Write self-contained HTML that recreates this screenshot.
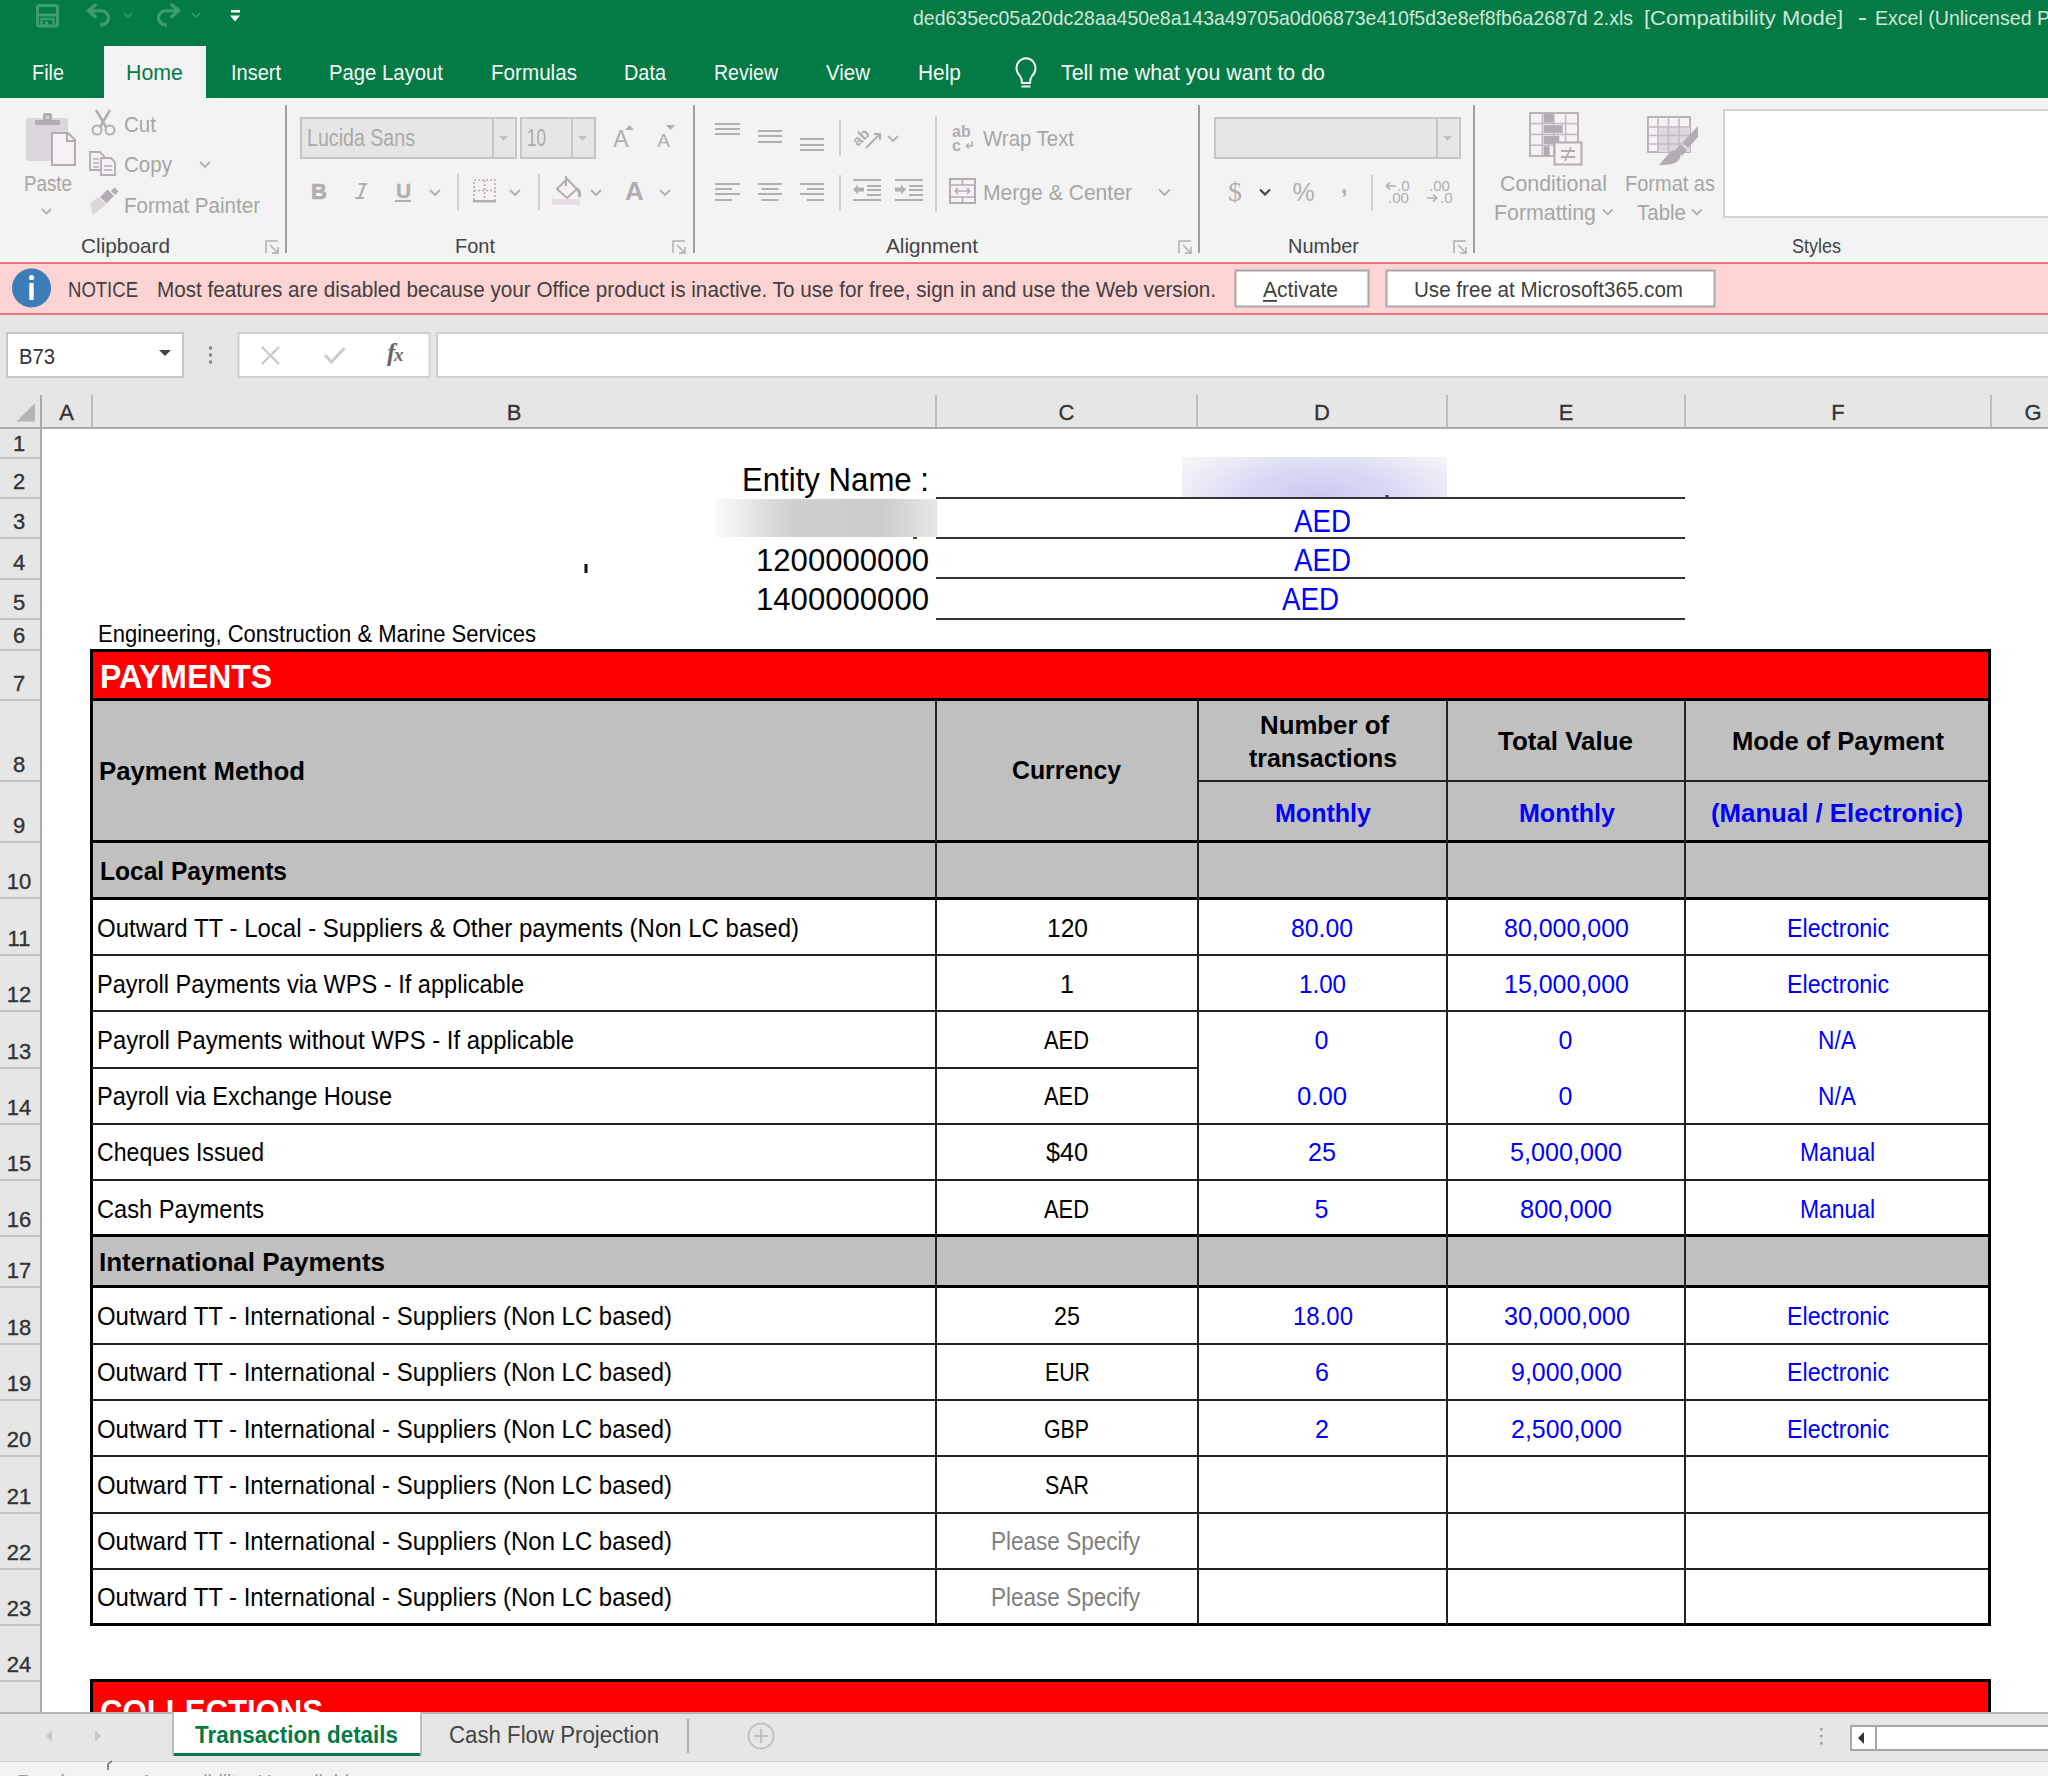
<!DOCTYPE html>
<html><head><meta charset="utf-8"><style>
html,body{margin:0;padding:0;background:#fff;overflow:hidden;width:2048px;height:1776px;}
svg{display:block;font-family:"Liberation Sans",sans-serif;white-space:pre;}
</style></head><body>
<svg width="2048" height="1776" viewBox="0 0 2048 1776">
<rect x="0" y="0" width="2048" height="98" fill="#047a45" />
<rect x="104" y="46" width="102" height="52" fill="#f3f3f3" />
<text x="32" y="79.5" font-size="22" fill="#f4f8f5" textLength="32" lengthAdjust="spacingAndGlyphs" >File</text>
<text x="231" y="79.5" font-size="22" fill="#f4f8f5" textLength="50" lengthAdjust="spacingAndGlyphs" >Insert</text>
<text x="329" y="79.5" font-size="22" fill="#f4f8f5" textLength="114" lengthAdjust="spacingAndGlyphs" >Page Layout</text>
<text x="491" y="79.5" font-size="22" fill="#f4f8f5" textLength="86" lengthAdjust="spacingAndGlyphs" >Formulas</text>
<text x="624" y="79.5" font-size="22" fill="#f4f8f5" textLength="42" lengthAdjust="spacingAndGlyphs" >Data</text>
<text x="714" y="79.5" font-size="22" fill="#f4f8f5" textLength="64" lengthAdjust="spacingAndGlyphs" >Review</text>
<text x="826" y="79.5" font-size="22" fill="#f4f8f5" textLength="44" lengthAdjust="spacingAndGlyphs" >View</text>
<text x="918" y="79.5" font-size="22" fill="#f4f8f5" textLength="43" lengthAdjust="spacingAndGlyphs" >Help</text>
<text x="1061" y="79.5" font-size="22" fill="#f4f8f5" textLength="264" lengthAdjust="spacingAndGlyphs" >Tell me what you want to do</text>
<text x="126" y="79.5" font-size="22" fill="#047a45" textLength="57" lengthAdjust="spacingAndGlyphs" >Home</text>
<text x="913" y="25" font-size="21" fill="#d2e5d9" textLength="720" lengthAdjust="spacingAndGlyphs" >ded635ec05a20dc28aa450e8a143a49705a0d06873e410f5d3e8ef8fb6a2687d 2.xls</text>
<text x="1644" y="25" font-size="21" fill="#d2e5d9" textLength="199" lengthAdjust="spacingAndGlyphs" >[Compatibility Mode]</text>
<rect x="1859" y="18" width="7" height="2" fill="#d2e5d9" />
<text x="1875" y="25" font-size="21" fill="#d2e5d9" textLength="175" lengthAdjust="spacingAndGlyphs" >Excel (Unlicensed P</text>
<rect x="37.5" y="5.5" width="20" height="20.5" rx="1.5" fill="none" stroke="#3e9d6c" stroke-width="3"/>
<rect x="39" y="13.5" width="17" height="3" rx="1.2" fill="#3e9d6c"/>
<rect x="41.5" y="19" width="12" height="7" fill="none" stroke="#3e9d6c" stroke-width="2.4"/><rect x="45" y="21.5" width="3" height="5" fill="#3e9d6c"/>
<path d="M96.5,4 l-8.5,6.8 l8.5,6.8 M88.5,10.8 h13 a7,7 0 0 1 0,14 h-1.5" fill="none" stroke="#3e9d6c" stroke-width="3.2" stroke-linejoin="round"/>
<path d="M124,13 l4,4 l4,-4" fill="none" stroke="#3e9d6c" stroke-width="1.5"/>
<path d="M170.5,4 l8.5,6.8 l-8.5,6.8 M178.5,10.8 h-13 a7,7 0 0 0 0,14 h1.5" fill="none" stroke="#3e9d6c" stroke-width="3.2" stroke-linejoin="round"/>
<path d="M192,13 l4,4 l4,-4" fill="none" stroke="#3e9d6c" stroke-width="1.5"/>
<rect x="231" y="10" width="9" height="2.5" fill="#fff"/><path d="M230,15.5 h10 l-5,6 z" fill="#fff"/>
<path d="M1020,76 a9.5,10 0 1 1 12,0 c-1.5,2 -2,4 -2,7 h-8 c0,-3 -0.5,-5 -2,-7 z M1021.5,86.5 h9" fill="none" stroke="#f4f8f5" stroke-width="2"/>
<rect x="0" y="98" width="2048" height="163" fill="#f3f3f3" />
<rect x="285" y="105" width="2" height="148" fill="#9e9e9e" />
<rect x="693" y="105" width="2" height="148" fill="#9e9e9e" />
<rect x="1198" y="105" width="2" height="148" fill="#9e9e9e" />
<rect x="1473" y="105" width="2" height="148" fill="#9e9e9e" />
<text x="81" y="253" font-size="21" fill="#444444" textLength="89" lengthAdjust="spacingAndGlyphs" >Clipboard</text>
<text x="455" y="253" font-size="21" fill="#444444" textLength="40" lengthAdjust="spacingAndGlyphs" >Font</text>
<text x="886" y="253" font-size="21" fill="#444444" textLength="92" lengthAdjust="spacingAndGlyphs" >Alignment</text>
<text x="1288" y="253" font-size="21" fill="#444444" textLength="71" lengthAdjust="spacingAndGlyphs" >Number</text>
<text x="1792" y="253" font-size="21" fill="#444444" textLength="49" lengthAdjust="spacingAndGlyphs" >Styles</text>
<path d="M266,253 v-12 h12" fill="none" stroke="#b0b0b0" stroke-width="1.5"/><path d="M270,245 l8,8 M278,247 v6 h-6" fill="none" stroke="#b0b0b0" stroke-width="1.5"/>
<path d="M673,253 v-12 h12" fill="none" stroke="#b0b0b0" stroke-width="1.5"/><path d="M677,245 l8,8 M685,247 v6 h-6" fill="none" stroke="#b0b0b0" stroke-width="1.5"/>
<path d="M1179,253 v-12 h12" fill="none" stroke="#b0b0b0" stroke-width="1.5"/><path d="M1183,245 l8,8 M1191,247 v6 h-6" fill="none" stroke="#b0b0b0" stroke-width="1.5"/>
<path d="M1454,253 v-12 h12" fill="none" stroke="#b0b0b0" stroke-width="1.5"/><path d="M1458,245 l8,8 M1466,247 v6 h-6" fill="none" stroke="#b0b0b0" stroke-width="1.5"/>
<rect x="26" y="118" width="42" height="43" rx="3" fill="#dbd6db"/>
<rect x="35" y="120" width="25" height="5" rx="1" fill="#b2adb2"/><rect x="43" y="113" width="9" height="8" rx="2" fill="#b2adb2"/><rect x="46" y="116" width="3" height="3" fill="#dbd6db"/>
<path d="M52,133 h16 l7,7 v25 h-23 z" fill="#f7f0f4" stroke="#b2adb2" stroke-width="2"/><path d="M67,133 v8 h8" fill="none" stroke="#b2adb2" stroke-width="2"/>
<text x="24" y="191" font-size="22" fill="#a6a6a6" textLength="48" lengthAdjust="spacingAndGlyphs" >Paste</text>
<path d="M42,209 l4.5,4.5 l4.5,-4.5" fill="none" stroke="#b2adb2" stroke-width="1.8"/>
<path d="M96,110 l10,17 M110,110 l-10,17" fill="none" stroke="#b2adb2" stroke-width="2.5"/><circle cx="97" cy="130" r="4.5" fill="none" stroke="#b2adb2" stroke-width="2"/><circle cx="110" cy="130" r="4.5" fill="none" stroke="#b2adb2" stroke-width="2"/>
<text x="124" y="132" font-size="22" fill="#a6a6a6" textLength="32" lengthAdjust="spacingAndGlyphs" >Cut</text>
<path d="M90,152 h10 l4,4 v14 h-14 z" fill="#f7f0f4" stroke="#b2adb2" stroke-width="1.8"/><path d="M101,158 h10 l4,4 v13 h-14 z" fill="#f7f0f4" stroke="#b2adb2" stroke-width="1.8"/>
<path d="M93,159 h6 M93,163 h6 M93,167 h6 M104,166 h8 M104,170 h8" stroke="#b2adb2" stroke-width="1.5"/>
<text x="124" y="172" font-size="22" fill="#a6a6a6" textLength="48" lengthAdjust="spacingAndGlyphs" >Copy</text>
<path d="M200,162 l5,5 l5,-5" fill="none" stroke="#b2adb2" stroke-width="1.8"/>
<path d="M90.5,203 l8,-6 l7.5,7.5 l-13.5,11 z" fill="#dcd7dc"/><path d="M100,197 l7.5,-7.5 l6.5,6.5 l-7.5,7.5 z" fill="#b2adb2"/><path d="M111,191 l3.5,-3.5 l4,4 l-3.5,3.5 z" fill="#b2adb2"/>
<text x="124" y="213" font-size="22" fill="#a6a6a6" textLength="136" lengthAdjust="spacingAndGlyphs" >Format Painter</text>
<rect x="301" y="118" width="215" height="40" fill="#e6e6e6" stroke="#c6c6c6" stroke-width="2"/>
<rect x="492" y="119" width="2" height="38" fill="#c6c6c6" />
<path d="M499,136 h9 l-4.5,5 z" fill="#c0c0c0"/>
<rect x="521" y="118" width="74" height="40" fill="#e6e6e6" stroke="#c6c6c6" stroke-width="2"/>
<rect x="571" y="119" width="2" height="38" fill="#c6c6c6" />
<path d="M578,136 h9 l-4.5,5 z" fill="#c0c0c0"/>
<text x="307" y="146" font-size="23" fill="#aaaaaa" textLength="108" lengthAdjust="spacingAndGlyphs" >Lucida Sans</text>
<text x="527" y="146" font-size="23" fill="#aaaaaa" textLength="19" lengthAdjust="spacingAndGlyphs" >10</text>
<text x="621.0" y="147" font-size="23" fill="#b2adb2" text-anchor="middle" >A</text>
<path d="M625,130 l4.5,-5 l4.5,5 z" fill="#b2adb2"/>
<text x="663.5" y="147" font-size="19" fill="#b2adb2" text-anchor="middle" >A</text>
<path d="M666,125 l4.5,5 l4.5,-5 z" fill="#b2adb2"/>
<text x="319.0" y="198.5" font-size="22" font-weight="bold" fill="#b2adb2" text-anchor="middle" stroke="#b2adb2" stroke-width="0.6">B</text>
<path d="M358.8,184 h8.4 M364.8,184 l-5.4,14 M355.2,198 h8.8" fill="none" stroke="#b2adb2" stroke-width="2.2"/>
<text x="403.5" y="198" font-size="21" font-weight="bold" fill="#b2adb2" text-anchor="middle" stroke="#b2adb2" stroke-width="0.4">U</text>
<rect x="395" y="200" width="16" height="2" fill="#b2adb2" />
<path d="M430,190 l5,5 l5,-5" fill="none" stroke="#b2adb2" stroke-width="1.8"/>
<path d="M510,190 l5,5 l5,-5" fill="none" stroke="#b2adb2" stroke-width="1.8"/>
<path d="M591,190 l5,5 l5,-5" fill="none" stroke="#b2adb2" stroke-width="1.8"/>
<path d="M660,190 l5,5 l5,-5" fill="none" stroke="#b2adb2" stroke-width="1.8"/>
<rect x="457" y="174" width="2" height="36" fill="#d0d0d0" />
<rect x="538" y="174" width="2" height="36" fill="#d0d0d0" />
<rect x="474" y="180" width="21" height="21" fill="#f7f0f4" stroke="#b2adb2" stroke-width="1.6" stroke-dasharray="2,2"/><path d="M484.5,180 v21 M474,190.5 h21" stroke="#b2adb2" stroke-width="1.6" stroke-dasharray="2,2"/><rect x="473" y="200" width="23" height="2.5" fill="#b2adb2"/>
<path d="M557,189 l10,-10 l10,10 l-10,9 z" fill="#f7f0f4" stroke="#b2adb2" stroke-width="2"/><path d="M566,176 v10" stroke="#b2adb2" stroke-width="2"/><path d="M577,189 q4,3 2,8" fill="none" stroke="#b2adb2" stroke-width="3"/>
<rect x="552" y="199" width="28" height="6" fill="#e6dce3" />
<text x="634.5" y="200" font-size="26" font-weight="bold" fill="#b2adb2" text-anchor="middle" >A</text>
<rect x="715" y="123" width="25" height="2" fill="#b2adb2" />
<rect x="715" y="128" width="25" height="2" fill="#b2adb2" />
<rect x="715" y="133" width="25" height="2" fill="#b2adb2" />
<rect x="758" y="130" width="24" height="2" fill="#b2adb2" />
<rect x="758" y="135" width="24" height="2" fill="#b2adb2" />
<rect x="758" y="141" width="24" height="2" fill="#b2adb2" />
<rect x="800" y="138" width="24" height="2" fill="#b2adb2" />
<rect x="800" y="144" width="24" height="2" fill="#b2adb2" />
<rect x="800" y="149" width="24" height="2" fill="#b2adb2" />
<rect x="839" y="120" width="2" height="36" fill="#d0d0d0" />
<rect x="839" y="175" width="2" height="36" fill="#d0d0d0" />
<text x="0" y="0" font-size="15" fill="#b2adb2" transform="translate(858,147) rotate(-45)" font-weight="bold">ab</text><path d="M866,148 l14,-14 M874,134 h6 v6" fill="none" stroke="#b2adb2" stroke-width="2"/>
<path d="M888,136 l5,5 l5,-5" fill="none" stroke="#b2adb2" stroke-width="1.8"/>
<rect x="935" y="116" width="2" height="96" fill="#d0d0d0" />
<text x="952" y="137" font-size="16" font-weight="bold" fill="#b2adb2">ab</text><text x="952" y="151" font-size="16" font-weight="bold" fill="#b2adb2">c</text><path d="M972,141 v5 h-6 M966,146 l3,-2.5 M966,146 l3,2.5" fill="none" stroke="#b2adb2" stroke-width="1.5"/>
<text x="983" y="146" font-size="22" fill="#a6a6a6" textLength="91" lengthAdjust="spacingAndGlyphs" >Wrap Text</text>
<rect x="715" y="183" width="25" height="2" fill="#b2adb2" />
<rect x="715" y="188" width="17" height="2" fill="#b2adb2" />
<rect x="715" y="193" width="25" height="2" fill="#b2adb2" />
<rect x="715" y="199" width="17" height="2" fill="#b2adb2" />
<rect x="758" y="183" width="24" height="2" fill="#b2adb2" />
<rect x="761.5" y="188" width="17" height="2" fill="#b2adb2" />
<rect x="758" y="193" width="24" height="2" fill="#b2adb2" />
<rect x="761.5" y="199" width="17" height="2" fill="#b2adb2" />
<rect x="800" y="183" width="24" height="2" fill="#b2adb2" />
<rect x="807" y="188" width="17" height="2" fill="#b2adb2" />
<rect x="800" y="193" width="24" height="2" fill="#b2adb2" />
<rect x="807" y="199" width="17" height="2" fill="#b2adb2" />
<rect x="853" y="179" width="28" height="2" fill="#b2adb2" />
<rect x="853" y="199" width="28" height="2" fill="#b2adb2" />
<rect x="867" y="185" width="14" height="2" fill="#b2adb2" />
<rect x="867" y="189" width="14" height="2" fill="#b2adb2" />
<rect x="867" y="194" width="14" height="2" fill="#b2adb2" />
<path d="M853,189.5 l5,-5 v3 h6 v4 h-6 v3 z" fill="#b2adb2"/>
<rect x="895" y="179" width="28" height="2" fill="#b2adb2" />
<rect x="895" y="199" width="28" height="2" fill="#b2adb2" />
<rect x="909" y="185" width="14" height="2" fill="#b2adb2" />
<rect x="909" y="189" width="14" height="2" fill="#b2adb2" />
<rect x="909" y="194" width="14" height="2" fill="#b2adb2" />
<path d="M906,189.5 l-5,-5 v3 h-6 v4 h6 v3 z" fill="#b2adb2"/>
<rect x="950" y="179" width="25" height="24" fill="#f7f0f4" stroke="#b2adb2" stroke-width="2"/><path d="M950,185 h25 M950,197 h25 M962.5,179 v6 M962.5,197 v6 M955,191 h15 M955,191 l3,-3 M955,191 l3,3 M970,191 l-3,-3 M970,191 l-3,3" fill="none" stroke="#b2adb2" stroke-width="1.6"/>
<text x="983" y="200" font-size="22" fill="#a6a6a6" textLength="149" lengthAdjust="spacingAndGlyphs" >Merge &amp; Center</text>
<path d="M1159,189.5 l5.5,5.5 l5.5,-5.5" fill="none" stroke="#b2adb2" stroke-width="1.8"/>
<rect x="1215" y="118" width="245" height="40" fill="#e6e6e6" stroke="#c6c6c6" stroke-width="2"/>
<rect x="1436" y="119" width="2" height="38" fill="#c6c6c6" />
<path d="M1443,136 h9 l-4.5,5 z" fill="#c0c0c0"/>
<text x="1235.0" y="201" font-size="28" fill="#b2adb2" text-anchor="middle" font-family="Liberation Serif">$</text>
<path d="M1260,189.5 l5,5 l5,-5" fill="none" stroke="#444" stroke-width="2.2"/>
<text x="1303.5" y="201" font-size="25" fill="#b2adb2" text-anchor="middle" >%</text>
<text x="1344.0" y="193" font-size="24" font-weight="bold" fill="#b2adb2" text-anchor="middle" >,</text>
<rect x="1371" y="175" width="2" height="36" fill="#d0d0d0" />
<text x="1397" y="191" font-size="15" fill="#b2adb2">.0</text><text x="1388" y="203" font-size="15" fill="#b2adb2">.00</text><path d="M1386,186 h10 M1386,186 l4,-3.5 M1386,186 l4,3.5" fill="none" stroke="#b2adb2" stroke-width="1.6"/>
<text x="1429" y="191" font-size="15" fill="#b2adb2">.00</text><text x="1440" y="203" font-size="15" fill="#b2adb2">.0</text><path d="M1427,198 h10 M1437,198 l-4,-3.5 M1437,198 l-4,3.5" fill="none" stroke="#b2adb2" stroke-width="1.6"/>
<rect x="1530" y="113" width="48" height="43" fill="#f7f0f4" stroke="#b2adb2" stroke-width="1.8"/>
<rect x="1541.5" y="113" width="1.6" height="43" fill="#c2bdc2" />
<rect x="1553.0" y="113" width="1.6" height="43" fill="#c2bdc2" />
<rect x="1564.8" y="113" width="1.6" height="43" fill="#c2bdc2" />
<rect x="1530" y="122.8" width="48" height="1.6" fill="#c2bdc2" />
<rect x="1530" y="133.6" width="48" height="1.6" fill="#c2bdc2" />
<rect x="1530" y="144.39999999999998" width="48" height="1.6" fill="#c2bdc2" />
<rect x="1543.6" y="113.8" width="10.2" height="8.9" fill="#b3adb3" />
<rect x="1543.6" y="125.2" width="19.1" height="7.7" fill="#b3adb3" />
<rect x="1543.6" y="135.8" width="15.7" height="8.2" fill="#b3adb3" />
<rect x="1543.6" y="146.2" width="6.1" height="9.2" fill="#b3adb3" />
<rect x="1554.5" y="142.5" width="27" height="22" fill="#f7f0f4" stroke="#b2adb2" stroke-width="2"/>
<path d="M1561,151 h14 M1561,157 h14 M1571,147 l-6,14" stroke="#b2adb2" stroke-width="1.8"/>
<text x="1500" y="191" font-size="22" fill="#a6a6a6" textLength="107" lengthAdjust="spacingAndGlyphs" >Conditional</text>
<text x="1494" y="220" font-size="22" fill="#a6a6a6" textLength="102" lengthAdjust="spacingAndGlyphs" >Formatting</text>
<path d="M1603,209.5 l4.8,4.8 l4.8,-4.8" fill="none" stroke="#b2adb2" stroke-width="1.8"/>
<rect x="1648" y="117" width="42" height="35" fill="#f7f0f4" stroke="#b2adb2" stroke-width="1.8"/>
<rect x="1658" y="127" width="32" height="25" fill="#ddd8dd" />
<rect x="1657.2" y="117" width="1.6" height="35" fill="#c2bdc2" />
<rect x="1667.7" y="117" width="1.6" height="35" fill="#c2bdc2" />
<rect x="1678.2" y="117" width="1.6" height="35" fill="#c2bdc2" />
<rect x="1648" y="126.2" width="42" height="1.6" fill="#c2bdc2" />
<rect x="1648" y="134.7" width="42" height="1.6" fill="#c2bdc2" />
<rect x="1648" y="143.2" width="42" height="1.6" fill="#c2bdc2" />
<path d="M1698,126 v11 l-10,11 l-5.5,-5.5 z" fill="#b3adb3"/><path d="M1681,144.5 l6,6 l-5.5,5.5 l-6,-6 z" fill="#b3adb3"/><path d="M1659,165 l10.5,-12.5 a6,6 0 0 1 9.5,7.5 c-3,4 -10,5 -20,5 z" fill="#b3adb3"/>
<text x="1625" y="191" font-size="22" fill="#a6a6a6" textLength="90" lengthAdjust="spacingAndGlyphs" >Format as</text>
<text x="1637" y="220" font-size="22" fill="#a6a6a6" textLength="49" lengthAdjust="spacingAndGlyphs" >Table</text>
<path d="M1692,209.5 l4.8,4.8 l4.8,-4.8" fill="none" stroke="#b2adb2" stroke-width="1.8"/>
<rect x="1724" y="110" width="340" height="107" fill="#ffffff" stroke="#d4d4d4" stroke-width="2"/>
<rect x="0" y="262" width="2048" height="53" fill="#fed3d4" />
<rect x="0" y="262" width="2048" height="2" fill="#f0737c" />
<rect x="0" y="313" width="2048" height="2" fill="#f0737c" />
<circle cx="31.5" cy="288" r="19.5" fill="#3b7db7"/><circle cx="31.5" cy="277.5" r="2.6" fill="#fff"/><rect x="29.3" y="283" width="4.4" height="17" fill="#fff"/>
<text x="68" y="297" font-size="22" fill="#404040" textLength="70" lengthAdjust="spacingAndGlyphs" >NOTICE</text>
<text x="157" y="297" font-size="22" fill="#404040" textLength="1059" lengthAdjust="spacingAndGlyphs" >Most features are disabled because your Office product is inactive. To use for free, sign in and use the Web version.</text>
<rect x="1235.5" y="270.5" width="133" height="36" fill="#ffffff" stroke="#a8a8a8" stroke-width="2"/>
<text x="1263" y="297" font-size="22" fill="#404040" textLength="75" lengthAdjust="spacingAndGlyphs" >Activate</text>
<rect x="1263" y="300" width="14" height="1.8" fill="#404040" />
<rect x="1386.5" y="270.5" width="328" height="36" fill="#ffffff" stroke="#a8a8a8" stroke-width="2"/>
<text x="1414" y="297" font-size="22" fill="#404040" textLength="269" lengthAdjust="spacingAndGlyphs" >Use free at Microsoft365.com</text>
<rect x="0" y="315" width="2048" height="113" fill="#e6e6e6" />
<rect x="7" y="333" width="176" height="44" fill="#ffffff" stroke="#c6c6c6" stroke-width="2"/>
<text x="19" y="364" font-size="22" fill="#333333" textLength="36" lengthAdjust="spacingAndGlyphs" >B73</text>
<path d="M159,350 h12 l-6,6 z" fill="#444"/>
<rect x="209" y="346.5" width="3" height="3" fill="#888" />
<rect x="209" y="353.5" width="3" height="3" fill="#888" />
<rect x="209" y="360.5" width="3" height="3" fill="#888" />
<rect x="238.5" y="333" width="191" height="44" fill="#ffffff" stroke="#cfcfcf" stroke-width="2"/>
<path d="M262,347 l17,17 M279,347 l-17,17" stroke="#c8c8c8" stroke-width="2"/>
<path d="M325,355 l6.5,7 l13,-14" fill="none" stroke="#cccccc" stroke-width="3"/>
<text x="387" y="361" font-size="25" font-weight="bold" fill="#686868" font-family="Liberation Serif" font-style="italic">f</text>
<text x="394" y="361" font-size="19" font-weight="bold" fill="#686868" font-family="Liberation Serif" font-style="italic">x</text>
<rect x="437" y="333" width="2048" height="44" fill="#ffffff" stroke="#cfcfcf" stroke-width="2"/>
<rect x="0" y="427" width="2048" height="2" fill="#ababab" />
<text x="66.5" y="420" font-size="22" fill="#333333" text-anchor="middle" stroke="#333333" stroke-width="0.3">A</text>
<rect x="91" y="395" width="2" height="32" fill="#bdbdbd" />
<text x="514.0" y="420" font-size="22" fill="#333333" text-anchor="middle" stroke="#333333" stroke-width="0.3">B</text>
<rect x="935" y="395" width="2" height="32" fill="#bdbdbd" />
<text x="1066.5" y="420" font-size="22" fill="#333333" text-anchor="middle" stroke="#333333" stroke-width="0.3">C</text>
<rect x="1196" y="395" width="2" height="32" fill="#bdbdbd" />
<text x="1322.0" y="420" font-size="22" fill="#333333" text-anchor="middle" stroke="#333333" stroke-width="0.3">D</text>
<rect x="1446" y="395" width="2" height="32" fill="#bdbdbd" />
<text x="1566.0" y="420" font-size="22" fill="#333333" text-anchor="middle" stroke="#333333" stroke-width="0.3">E</text>
<rect x="1684" y="395" width="2" height="32" fill="#bdbdbd" />
<text x="1838.0" y="420" font-size="22" fill="#333333" text-anchor="middle" stroke="#333333" stroke-width="0.3">F</text>
<rect x="1990" y="395" width="2" height="32" fill="#bdbdbd" />
<text x="2033.0" y="420" font-size="22" fill="#333333" text-anchor="middle" stroke="#333333" stroke-width="0.3">G</text>
<rect x="2074" y="395" width="2" height="32" fill="#bdbdbd" />
<polygon points="35,403 35,421.5 16.5,421.5" fill="#b4b4b4"/>
<rect x="42" y="429" width="2048" height="1283" fill="#ffffff" />
<rect x="0" y="429" width="40" height="1283" fill="#e6e6e6" />
<rect x="40" y="395" width="2" height="1317" fill="#ababab" />
<rect x="0" y="457" width="40" height="2" fill="#c4c4c4" />
<text x="19" y="451" font-size="22" fill="#333333" text-anchor="middle" stroke="#333333" stroke-width="0.35">1</text>
<rect x="0" y="497" width="40" height="2" fill="#c4c4c4" />
<text x="19" y="489" font-size="22" fill="#333333" text-anchor="middle" stroke="#333333" stroke-width="0.35">2</text>
<rect x="0" y="537" width="40" height="2" fill="#c4c4c4" />
<text x="19" y="529" font-size="22" fill="#333333" text-anchor="middle" stroke="#333333" stroke-width="0.35">3</text>
<rect x="0" y="578" width="40" height="2" fill="#c4c4c4" />
<text x="19" y="570" font-size="22" fill="#333333" text-anchor="middle" stroke="#333333" stroke-width="0.35">4</text>
<rect x="0" y="618" width="40" height="2" fill="#c4c4c4" />
<text x="19" y="610" font-size="22" fill="#333333" text-anchor="middle" stroke="#333333" stroke-width="0.35">5</text>
<rect x="0" y="649" width="40" height="2" fill="#c4c4c4" />
<text x="19" y="643" font-size="22" fill="#333333" text-anchor="middle" stroke="#333333" stroke-width="0.35">6</text>
<rect x="0" y="699" width="40" height="2" fill="#c4c4c4" />
<text x="19" y="691" font-size="22" fill="#333333" text-anchor="middle" stroke="#333333" stroke-width="0.35">7</text>
<rect x="0" y="780" width="40" height="2" fill="#c4c4c4" />
<text x="19" y="772" font-size="22" fill="#333333" text-anchor="middle" stroke="#333333" stroke-width="0.35">8</text>
<rect x="0" y="841" width="40" height="2" fill="#c4c4c4" />
<text x="19" y="833" font-size="22" fill="#333333" text-anchor="middle" stroke="#333333" stroke-width="0.35">9</text>
<rect x="0" y="897" width="40" height="2" fill="#c4c4c4" />
<text x="19" y="889" font-size="22" fill="#333333" text-anchor="middle" stroke="#333333" stroke-width="0.35">10</text>
<rect x="0" y="954" width="40" height="2" fill="#c4c4c4" />
<text x="19" y="946" font-size="22" fill="#333333" text-anchor="middle" stroke="#333333" stroke-width="0.35">11</text>
<rect x="0" y="1010" width="40" height="2" fill="#c4c4c4" />
<text x="19" y="1002" font-size="22" fill="#333333" text-anchor="middle" stroke="#333333" stroke-width="0.35">12</text>
<rect x="0" y="1067" width="40" height="2" fill="#c4c4c4" />
<text x="19" y="1059" font-size="22" fill="#333333" text-anchor="middle" stroke="#333333" stroke-width="0.35">13</text>
<rect x="0" y="1123" width="40" height="2" fill="#c4c4c4" />
<text x="19" y="1115" font-size="22" fill="#333333" text-anchor="middle" stroke="#333333" stroke-width="0.35">14</text>
<rect x="0" y="1179" width="40" height="2" fill="#c4c4c4" />
<text x="19" y="1171" font-size="22" fill="#333333" text-anchor="middle" stroke="#333333" stroke-width="0.35">15</text>
<rect x="0" y="1235" width="40" height="2" fill="#c4c4c4" />
<text x="19" y="1227" font-size="22" fill="#333333" text-anchor="middle" stroke="#333333" stroke-width="0.35">16</text>
<rect x="0" y="1286" width="40" height="2" fill="#c4c4c4" />
<text x="19" y="1278" font-size="22" fill="#333333" text-anchor="middle" stroke="#333333" stroke-width="0.35">17</text>
<rect x="0" y="1343" width="40" height="2" fill="#c4c4c4" />
<text x="19" y="1335" font-size="22" fill="#333333" text-anchor="middle" stroke="#333333" stroke-width="0.35">18</text>
<rect x="0" y="1399" width="40" height="2" fill="#c4c4c4" />
<text x="19" y="1391" font-size="22" fill="#333333" text-anchor="middle" stroke="#333333" stroke-width="0.35">19</text>
<rect x="0" y="1455" width="40" height="2" fill="#c4c4c4" />
<text x="19" y="1447" font-size="22" fill="#333333" text-anchor="middle" stroke="#333333" stroke-width="0.35">20</text>
<rect x="0" y="1512" width="40" height="2" fill="#c4c4c4" />
<text x="19" y="1504" font-size="22" fill="#333333" text-anchor="middle" stroke="#333333" stroke-width="0.35">21</text>
<rect x="0" y="1568" width="40" height="2" fill="#c4c4c4" />
<text x="19" y="1560" font-size="22" fill="#333333" text-anchor="middle" stroke="#333333" stroke-width="0.35">22</text>
<rect x="0" y="1624" width="40" height="2" fill="#c4c4c4" />
<text x="19" y="1616" font-size="22" fill="#333333" text-anchor="middle" stroke="#333333" stroke-width="0.35">23</text>
<rect x="0" y="1680" width="40" height="2" fill="#c4c4c4" />
<text x="19" y="1672" font-size="22" fill="#333333" text-anchor="middle" stroke="#333333" stroke-width="0.35">24</text>
<rect x="0" y="1739" width="40" height="2" fill="#c4c4c4" />
<text x="19" y="1731" font-size="22" fill="#333333" text-anchor="middle" stroke="#333333" stroke-width="0.35">25</text>
<defs><filter id="bl" x="-20%" y="-50%" width="140%" height="200%"><feGaussianBlur stdDeviation="8"/></filter><clipPath id="c1"><rect x="1182" y="457" width="265" height="40"/></clipPath><clipPath id="c2"><rect x="716" y="499" width="220" height="38"/></clipPath></defs>
<defs><radialGradient id="gb" cx="0.52" cy="1" r="0.6" fx="0.52" fy="1" gradientTransform="translate(0.52,1) scale(1,2.6) translate(-0.52,-1)"><stop offset="0" stop-color="#cacaf2"/><stop offset="0.45" stop-color="#d8d8f5"/><stop offset="1" stop-color="#f5f5f7"/></radialGradient><linearGradient id="gg" x1="0" x2="1" y1="0" y2="0"><stop offset="0" stop-color="#fafafa"/><stop offset="0.35" stop-color="#cfcfcf"/><stop offset="0.75" stop-color="#cbcccc"/><stop offset="1" stop-color="#e6e7e7"/></linearGradient></defs>
<rect x="1182" y="457" width="265" height="40" fill="url(#gb)"/>
<rect x="716" y="499" width="221" height="38" fill="url(#gg)"/>
<rect x="1385.5" y="495" width="3" height="2" fill="#3030c0" />
<rect x="913" y="537" width="4" height="2" fill="#604020" />
<text x="742" y="491" font-size="33" fill="#000000" textLength="187" lengthAdjust="spacingAndGlyphs" >Entity Name :</text>
<rect x="936" y="497" width="749" height="2" fill="#333333" />
<rect x="936" y="537" width="749" height="2" fill="#333333" />
<rect x="936" y="577" width="749" height="2" fill="#333333" />
<rect x="936" y="618" width="749" height="2" fill="#333333" />
<text x="1294" y="532" font-size="31" fill="#0000ff" textLength="57" lengthAdjust="spacingAndGlyphs" >AED</text>
<text x="1294" y="571" font-size="31" fill="#0000ff" textLength="57" lengthAdjust="spacingAndGlyphs" >AED</text>
<text x="1282" y="610" font-size="31" fill="#0000ff" textLength="57" lengthAdjust="spacingAndGlyphs" >AED</text>
<text x="756" y="571" font-size="31" fill="#000000" textLength="173" lengthAdjust="spacingAndGlyphs" >1200000000</text>
<text x="756" y="610" font-size="31" fill="#000000" textLength="173" lengthAdjust="spacingAndGlyphs" >1400000000</text>
<rect x="584.5" y="564" width="3" height="9" fill="#111" />
<text x="98" y="642" font-size="23" fill="#000000" textLength="438" lengthAdjust="spacingAndGlyphs" >Engineering, Construction &amp; Marine Services</text>
<rect x="90" y="649" width="1901" height="1" fill="#000" />
<rect x="92" y="652" width="1896" height="46" fill="#ff0000" />
<rect x="92" y="701" width="1896" height="139" fill="#c0c0c0" />
<rect x="92" y="843" width="1896" height="54" fill="#c0c0c0" />
<rect x="92" y="1237" width="1896" height="48" fill="#c0c0c0" />
<rect x="90" y="649" width="1901" height="3" fill="#000" />
<rect x="90" y="698" width="1901" height="3" fill="#000" />
<rect x="90" y="840" width="1901" height="3" fill="#000" />
<rect x="90" y="897" width="1901" height="3" fill="#000" />
<rect x="90" y="1234" width="1901" height="3" fill="#000" />
<rect x="90" y="1285" width="1901" height="3" fill="#000" />
<rect x="90" y="1623" width="1901" height="3" fill="#000" />
<rect x="90" y="649" width="3" height="977" fill="#000" />
<rect x="1988" y="649" width="3" height="977" fill="#000" />
<rect x="92" y="954" width="1896" height="2" fill="#222" />
<rect x="92" y="1010" width="1896" height="2" fill="#222" />
<rect x="92" y="1123" width="1896" height="2" fill="#222" />
<rect x="92" y="1179" width="1896" height="2" fill="#222" />
<rect x="92" y="1343" width="1896" height="2" fill="#222" />
<rect x="92" y="1399" width="1896" height="2" fill="#222" />
<rect x="92" y="1455" width="1896" height="2" fill="#222" />
<rect x="92" y="1512" width="1896" height="2" fill="#222" />
<rect x="92" y="1568" width="1896" height="2" fill="#222" />
<rect x="92" y="1067" width="1105" height="2" fill="#222" />
<rect x="1197" y="780" width="791" height="2" fill="#222" />
<rect x="935" y="700" width="2" height="925" fill="#222" />
<rect x="1197" y="700" width="2" height="925" fill="#222" />
<rect x="1446" y="700" width="2" height="925" fill="#222" />
<rect x="1684" y="700" width="2" height="925" fill="#222" />
<text x="100" y="688" font-size="33" font-weight="bold" fill="#ffffff" textLength="172" lengthAdjust="spacingAndGlyphs" >PAYMENTS</text>
<text x="99" y="780" font-size="25" font-weight="bold" fill="#000" textLength="206" lengthAdjust="spacingAndGlyphs" >Payment Method</text>
<text x="1012" y="779" font-size="25" font-weight="bold" fill="#000" textLength="109" lengthAdjust="spacingAndGlyphs" >Currency</text>
<text x="1260" y="734" font-size="25" font-weight="bold" fill="#000" textLength="129" lengthAdjust="spacingAndGlyphs" >Number of</text>
<text x="1249" y="767" font-size="25" font-weight="bold" fill="#000" textLength="148" lengthAdjust="spacingAndGlyphs" >transactions</text>
<text x="1498" y="750" font-size="25" font-weight="bold" fill="#000" textLength="135" lengthAdjust="spacingAndGlyphs" >Total Value</text>
<text x="1732" y="750" font-size="25" font-weight="bold" fill="#000" textLength="212" lengthAdjust="spacingAndGlyphs" >Mode of Payment</text>
<text x="1275" y="822" font-size="25" font-weight="bold" fill="#0000ff" textLength="96" lengthAdjust="spacingAndGlyphs" >Monthly</text>
<text x="1519" y="822" font-size="25" font-weight="bold" fill="#0000ff" textLength="96" lengthAdjust="spacingAndGlyphs" >Monthly</text>
<text x="1711" y="822" font-size="25" font-weight="bold" fill="#0000ff" textLength="252" lengthAdjust="spacingAndGlyphs" >(Manual / Electronic)</text>
<text x="100" y="880" font-size="25" font-weight="bold" fill="#000" textLength="187" lengthAdjust="spacingAndGlyphs" >Local Payments</text>
<text x="99" y="1271" font-size="25" font-weight="bold" fill="#000" textLength="286" lengthAdjust="spacingAndGlyphs" >International Payments</text>
<text x="97" y="937" font-size="25" fill="#000" textLength="702" lengthAdjust="spacingAndGlyphs" >Outward TT - Local - Suppliers &amp; Other payments (Non LC based)</text>
<text x="1047" y="937" font-size="25" fill="#000" textLength="41" lengthAdjust="spacingAndGlyphs" >120</text>
<text x="1291" y="937" font-size="25" fill="#0000ff" textLength="62" lengthAdjust="spacingAndGlyphs" >80.00</text>
<text x="1504" y="937" font-size="25" fill="#0000ff" textLength="125" lengthAdjust="spacingAndGlyphs" >80,000,000</text>
<text x="1787" y="937" font-size="25" fill="#0000ff" textLength="102" lengthAdjust="spacingAndGlyphs" >Electronic</text>
<text x="97" y="993" font-size="25" fill="#000" textLength="427" lengthAdjust="spacingAndGlyphs" >Payroll Payments via WPS - If applicable</text>
<text x="1067.0" y="993" font-size="25" fill="#000" text-anchor="middle" >1</text>
<text x="1299" y="993" font-size="25" fill="#0000ff" textLength="47" lengthAdjust="spacingAndGlyphs" >1.00</text>
<text x="1504" y="993" font-size="25" fill="#0000ff" textLength="125" lengthAdjust="spacingAndGlyphs" >15,000,000</text>
<text x="1787" y="993" font-size="25" fill="#0000ff" textLength="102" lengthAdjust="spacingAndGlyphs" >Electronic</text>
<text x="97" y="1049" font-size="25" fill="#000" textLength="477" lengthAdjust="spacingAndGlyphs" >Payroll Payments without WPS - If applicable</text>
<text x="1044" y="1049" font-size="25" fill="#000" textLength="45" lengthAdjust="spacingAndGlyphs" >AED</text>
<text x="1321.5" y="1049" font-size="25" fill="#0000ff" text-anchor="middle" >0</text>
<text x="1565.5" y="1049" font-size="25" fill="#0000ff" text-anchor="middle" >0</text>
<text x="1818" y="1049" font-size="25" fill="#0000ff" textLength="38" lengthAdjust="spacingAndGlyphs" >N/A</text>
<text x="97" y="1105" font-size="25" fill="#000" textLength="295" lengthAdjust="spacingAndGlyphs" >Payroll via Exchange House</text>
<text x="1044" y="1105" font-size="25" fill="#000" textLength="45" lengthAdjust="spacingAndGlyphs" >AED</text>
<text x="1297" y="1105" font-size="25" fill="#0000ff" textLength="50" lengthAdjust="spacingAndGlyphs" >0.00</text>
<text x="1565.5" y="1105" font-size="25" fill="#0000ff" text-anchor="middle" >0</text>
<text x="1818" y="1105" font-size="25" fill="#0000ff" textLength="38" lengthAdjust="spacingAndGlyphs" >N/A</text>
<text x="97" y="1161" font-size="25" fill="#000" textLength="167" lengthAdjust="spacingAndGlyphs" >Cheques Issued</text>
<text x="1046" y="1161" font-size="25" fill="#000" textLength="42" lengthAdjust="spacingAndGlyphs" >$40</text>
<text x="1308" y="1161" font-size="25" fill="#0000ff" textLength="28" lengthAdjust="spacingAndGlyphs" >25</text>
<text x="1510" y="1161" font-size="25" fill="#0000ff" textLength="112" lengthAdjust="spacingAndGlyphs" >5,000,000</text>
<text x="1800" y="1161" font-size="25" fill="#0000ff" textLength="75" lengthAdjust="spacingAndGlyphs" >Manual</text>
<text x="97" y="1218" font-size="25" fill="#000" textLength="167" lengthAdjust="spacingAndGlyphs" >Cash Payments</text>
<text x="1044" y="1218" font-size="25" fill="#000" textLength="45" lengthAdjust="spacingAndGlyphs" >AED</text>
<text x="1321.5" y="1218" font-size="25" fill="#0000ff" text-anchor="middle" >5</text>
<text x="1520" y="1218" font-size="25" fill="#0000ff" textLength="92" lengthAdjust="spacingAndGlyphs" >800,000</text>
<text x="1800" y="1218" font-size="25" fill="#0000ff" textLength="75" lengthAdjust="spacingAndGlyphs" >Manual</text>
<text x="97" y="1325" font-size="25" fill="#000" textLength="575" lengthAdjust="spacingAndGlyphs" >Outward TT - International - Suppliers (Non LC based)</text>
<text x="1054" y="1325" font-size="25" fill="#000" textLength="26" lengthAdjust="spacingAndGlyphs" >25</text>
<text x="1293" y="1325" font-size="25" fill="#0000ff" textLength="60" lengthAdjust="spacingAndGlyphs" >18.00</text>
<text x="1504" y="1325" font-size="25" fill="#0000ff" textLength="126" lengthAdjust="spacingAndGlyphs" >30,000,000</text>
<text x="1787" y="1325" font-size="25" fill="#0000ff" textLength="102" lengthAdjust="spacingAndGlyphs" >Electronic</text>
<text x="97" y="1381" font-size="25" fill="#000" textLength="575" lengthAdjust="spacingAndGlyphs" >Outward TT - International - Suppliers (Non LC based)</text>
<text x="1045" y="1381" font-size="25" fill="#000" textLength="45" lengthAdjust="spacingAndGlyphs" >EUR</text>
<text x="1322.0" y="1381" font-size="25" fill="#0000ff" text-anchor="middle" >6</text>
<text x="1511" y="1381" font-size="25" fill="#0000ff" textLength="111" lengthAdjust="spacingAndGlyphs" >9,000,000</text>
<text x="1787" y="1381" font-size="25" fill="#0000ff" textLength="102" lengthAdjust="spacingAndGlyphs" >Electronic</text>
<text x="97" y="1438" font-size="25" fill="#000" textLength="575" lengthAdjust="spacingAndGlyphs" >Outward TT - International - Suppliers (Non LC based)</text>
<text x="1044" y="1438" font-size="25" fill="#000" textLength="45" lengthAdjust="spacingAndGlyphs" >GBP</text>
<text x="1322.0" y="1438" font-size="25" fill="#0000ff" text-anchor="middle" >2</text>
<text x="1511" y="1438" font-size="25" fill="#0000ff" textLength="111" lengthAdjust="spacingAndGlyphs" >2,500,000</text>
<text x="1787" y="1438" font-size="25" fill="#0000ff" textLength="102" lengthAdjust="spacingAndGlyphs" >Electronic</text>
<text x="97" y="1494" font-size="25" fill="#000" textLength="575" lengthAdjust="spacingAndGlyphs" >Outward TT - International - Suppliers (Non LC based)</text>
<text x="1045" y="1494" font-size="25" fill="#000" textLength="44" lengthAdjust="spacingAndGlyphs" >SAR</text>
<text x="97" y="1550" font-size="25" fill="#000" textLength="575" lengthAdjust="spacingAndGlyphs" >Outward TT - International - Suppliers (Non LC based)</text>
<text x="991" y="1550" font-size="25" fill="#808080" textLength="149" lengthAdjust="spacingAndGlyphs" >Please Specify</text>
<text x="97" y="1606" font-size="25" fill="#000" textLength="575" lengthAdjust="spacingAndGlyphs" >Outward TT - International - Suppliers (Non LC based)</text>
<text x="991" y="1606" font-size="25" fill="#808080" textLength="149" lengthAdjust="spacingAndGlyphs" >Please Specify</text>
<rect x="90" y="1679" width="1901" height="3" fill="#000" />
<rect x="90" y="1679" width="3" height="40" fill="#000" />
<rect x="1988" y="1679" width="3" height="40" fill="#000" />
<rect x="93" y="1682" width="1895" height="40" fill="#ff0000" />
<text x="100" y="1723" font-size="33" font-weight="bold" fill="#ffffff" textLength="223" lengthAdjust="spacingAndGlyphs" >COLLECTIONS</text>
<rect x="0" y="1712" width="2048" height="50" fill="#e6e6e6" />
<rect x="0" y="1712" width="2048" height="2" fill="#b4b4b4" />
<path d="M52,1730 l-6,6 l6,6 z" fill="#c8c8c8"/><path d="M95,1730 l6,6 l-6,6 z" fill="#c8c8c8"/>
<rect x="173" y="1712" width="248" height="44" fill="#ffffff" />
<rect x="173" y="1753" width="248" height="3" fill="#047a45" />
<rect x="172" y="1712" width="2" height="44" fill="#bdbdbd" />
<rect x="420" y="1712" width="2" height="44" fill="#bdbdbd" />
<text x="195" y="1743" font-size="23" font-weight="bold" fill="#047a45" textLength="203" lengthAdjust="spacingAndGlyphs" >Transaction details</text>
<text x="449" y="1743" font-size="23" fill="#444444" textLength="210" lengthAdjust="spacingAndGlyphs" >Cash Flow Projection</text>
<rect x="687" y="1719" width="2" height="34" fill="#b0b0b0" />
<circle cx="761" cy="1736" r="12.5" fill="none" stroke="#c0c0c0" stroke-width="2"/><path d="M754,1736 h14 M761,1729 v14" stroke="#c0c0c0" stroke-width="2"/>
<rect x="1820" y="1728" width="2.5" height="2.5" fill="#a0a0a0" />
<rect x="1820" y="1735" width="2.5" height="2.5" fill="#a0a0a0" />
<rect x="1820" y="1742" width="2.5" height="2.5" fill="#a0a0a0" />
<rect x="1851" y="1726" width="2048" height="24" fill="#ffffff" stroke="#a6a6a6" stroke-width="2"/>
<rect x="1875" y="1726" width="2" height="24" fill="#a6a6a6" />
<path d="M1858,1738 l6,-6 v12 z" fill="#333"/>
<rect x="0" y="1762" width="2048" height="14" fill="#f3f3f3" />
<rect x="0" y="1761" width="2048" height="1" fill="#d4d4d4" />
<text x="17" y="1790" font-size="22" fill="#999" textLength="58" lengthAdjust="spacingAndGlyphs" >Ready</text>
<text x="140" y="1790" font-size="22" fill="#999" textLength="220" lengthAdjust="spacingAndGlyphs" >Accessibility: Unavailable</text>
<path d="M108,1770 v-6 l4,-3" fill="none" stroke="#666" stroke-width="1.5"/>
</svg></body></html>
